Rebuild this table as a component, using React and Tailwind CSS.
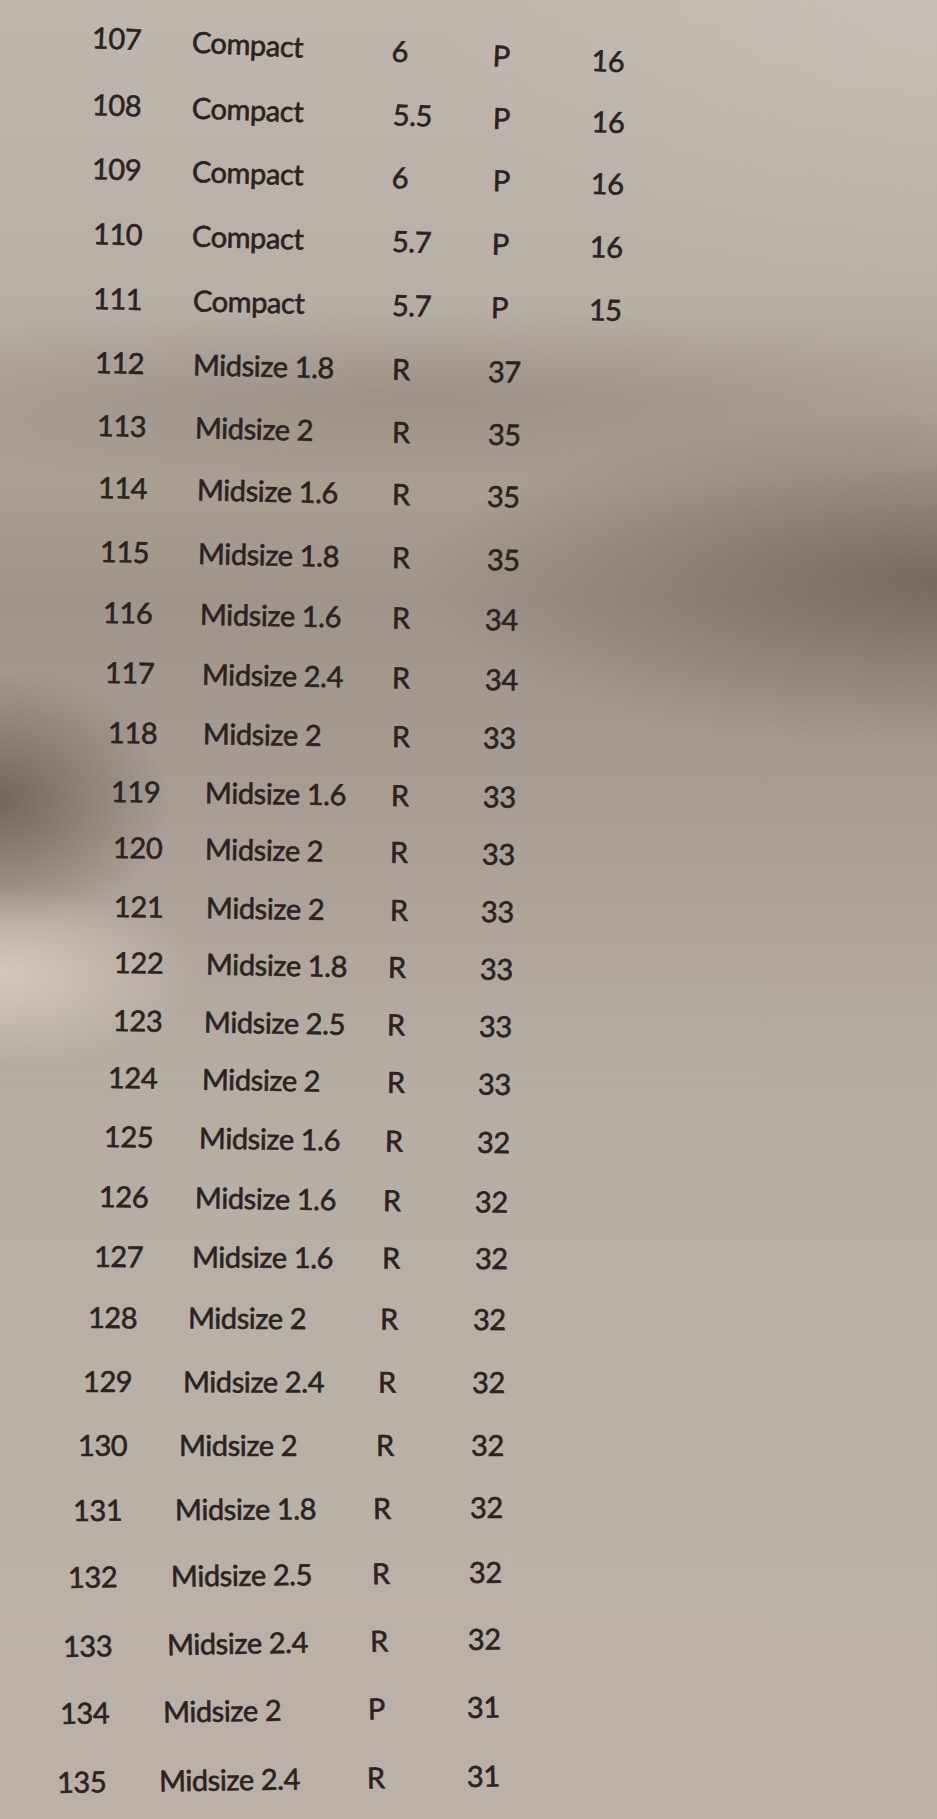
import React from "react";

const rows = [
  ["107", "Compact", "6", "P", "16", 38, [92, 192, 392, 493, 592], 2.6],
  ["108", "Compact", "5.5", "P", "16", 105, [92, 192, 393, 493, 592], 1.95],
  ["109", "Compact", "6", "P", "16", 169, [92, 192, 392, 493, 591], 1.7],
  ["110", "Compact", "5.7", "P", "16", 234, [93, 192, 392, 492, 590], 1.5],
  ["111", "Compact", "5.7", "P", "15", 299, [93, 193, 392, 491, 589], 1.3],
  ["112", "Midsize 1.8", "R", "37", "", 363, [95, 193, 392, 488], 1.3],
  ["113", "Midsize 2", "R", "35", "", 426, [97, 195, 392, 488], 1.3],
  ["114", "Midsize 1.6", "R", "35", "", 488, [98, 197, 392, 487], 1.3],
  ["115", "Midsize 1.8", "R", "35", "", 552, [100, 198, 392, 487], 1.2],
  ["116", "Midsize 1.6", "R", "34", "", 613, [103, 200, 392, 485], 1.05],
  ["117", "Midsize 2.4", "R", "34", "", 673, [105, 202, 392, 485], 1.05],
  ["118", "Midsize 2", "R", "33", "", 733, [108, 203, 392, 483], 0.8],
  ["119", "Midsize 1.6", "R", "33", "", 792, [111, 205, 391, 483], 0.8],
  ["120", "Midsize 2", "R", "33", "", 848, [113, 205, 390, 482], 1.0],
  ["121", "Midsize 2", "R", "33", "", 907, [114, 206, 390, 481], 0.8],
  ["122", "Midsize 1.8", "R", "33", "", 963, [114, 206, 388, 480], 1.0],
  ["123", "Midsize 2.5", "R", "33", "", 1021, [113, 204, 387, 479], 0.9],
  ["124", "Midsize 2", "R", "33", "", 1078, [108, 202, 387, 478], 1.0],
  ["125", "Midsize 1.6", "R", "32", "", 1137, [104, 199, 385, 477], 0.9],
  ["126", "Midsize 1.6", "R", "32", "", 1197, [99, 195, 383, 475], 0.8],
  ["127", "Midsize 1.6", "R", "32", "", 1257, [94, 192, 382, 475], 0.3],
  ["128", "Midsize 2", "R", "32", "", 1318, [88, 188, 380, 473], 0.3],
  ["129", "Midsize 2.4", "R", "32", "", 1382, [83, 183, 378, 472], 0.15],
  ["130", "Midsize 2", "R", "32", "", 1446, [78, 179, 376, 471], 0],
  ["131", "Midsize 1.8", "R", "32", "", 1511, [73, 175, 373, 470], -0.4],
  ["132", "Midsize 2.5", "R", "32", "", 1578, [68, 171, 372, 469], -0.7],
  ["133", "Midsize 2.4", "R", "32", "", 1647, [63, 167, 370, 468], -1.0],
  ["134", "Midsize 2", "P", "31", "", 1714, [60, 163, 368, 467], -0.85],
  ["135", "Midsize 2.4", "R", "31", "", 1783, [57, 159, 367, 467], -0.85],
];

function Row({ row, next }) {
  const [num, cls, c, d, e, y, xs, deg] = row;
  const height = next ? next[5] - y : 1819 - (y - 15);
  const cells = [num, cls, c, d, e];
  return (
    <div
      className="flex items-start"
      style={{
        height,
        transform: `rotate(${deg}deg)`,
        transformOrigin: `${xs[0]}px 15px`,
        paddingLeft: xs[0],
      }}
    >
      {cells.map((t, i) => {
        if (i >= xs.length) return null;
        const w = i + 1 < xs.length ? xs[i + 1] - xs[i] : 120;
        return (
          <span
            key={i}
            className="block shrink-0 whitespace-nowrap leading-[28px]"
            style={{ width: w }}
          >
            {t}
          </span>
        );
      })}
    </div>
  );
}

export default function App() {
  return (
    <div className="relative w-[937px] h-[1819px] overflow-hidden bg-[#b7aea4]">
      <div className="absolute inset-0 bg-[linear-gradient(to_bottom,#bfb7ae_0%,#b8afa5_16%,#a99e92_27%,#a0958a_33%,#a99e93_45%,#b5aca2_58%,#b9b0a6_75%,#bbb1a7_100%)]" />
      <div className="absolute inset-0 bg-[radial-gradient(ellipse_520px_170px_at_100%_580px,rgba(105,93,80,0.75),rgba(105,93,80,0)_100%)]" />
      <div className="absolute inset-0 bg-[radial-gradient(ellipse_700px_90px_at_45%_400px,rgba(120,108,96,0.35),rgba(120,108,96,0)_100%)]" />
      <div className="absolute inset-0 bg-[radial-gradient(ellipse_170px_130px_at_0px_800px,rgba(95,85,77,0.75),rgba(95,85,77,0)_100%)]" />
      <div className="absolute inset-0 bg-[radial-gradient(ellipse_200px_90px_at_0px_975px,rgba(225,215,205,0.7),rgba(225,215,205,0)_100%)]" />
      <div className="absolute inset-0 bg-[radial-gradient(ellipse_500px_300px_at_100%_0px,rgba(205,198,190,0.5),rgba(205,198,190,0)_100%)]" />
      <div className="relative flex flex-col pt-[23px] text-[29px] tracking-[-0.4px] text-[#2a231f] [-webkit-text-stroke:0.6px_#2a231f] font-['Lato','Noto_Sans',sans-serif]">
        {rows.map((r, i) => (
          <Row key={r[0]} row={r} next={rows[i + 1]} />
        ))}
      </div>
    </div>
  );
}
